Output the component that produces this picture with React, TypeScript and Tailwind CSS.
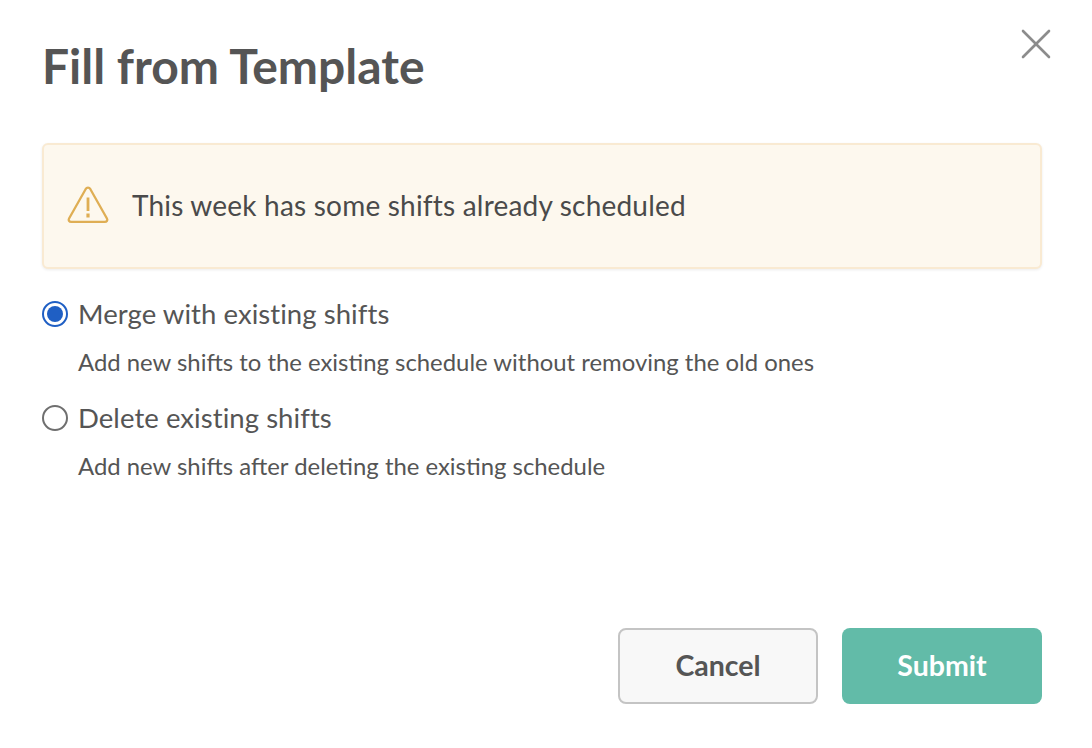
import { X } from 'lucide-react';

const font = { fontFamily: '"Lato", "Noto Sans", sans-serif' };

function WarningIcon() {
    return (
        <svg width="42" height="38" viewBox="0 0 42 38" fill="none" className="shrink-0 -translate-y-[1px]">
            <path d="M18.6 3.2 2.2 32.2C1 34.4 2.2 35.8 4.2 35.8H37.8C39.8 35.8 41 34.4 39.8 32.2L23.4 3.2C22.2 1.2 19.8 1.2 18.6 3.2Z" stroke="#dfae54" strokeWidth="2.3" strokeLinejoin="round" />
            <path d="M21 11.5V25" stroke="#dfae54" strokeWidth="2.8" />
            <path d="M21 27.5V31.5" stroke="#dfae54" strokeWidth="3.2" />
        </svg>
    );
}

function RadioOption({ label, hint, checked }: { label: string; hint: string; checked?: boolean }) {
    return (
        <div className="flex flex-col">
            <div className="flex items-center gap-[10px] h-[26px]">
                <span className={`flex items-center justify-center w-[26px] h-[26px] rounded-full border-2 bg-white ${checked ? 'border-[#1f5fc4]' : 'border-[#6f6f6f]'}`}>
                    {checked && <span className="w-[16px] h-[16px] rounded-full bg-[#1f5fc4]" />}
                </span>
                <span className="text-[27.5px] tracking-[0.06px] leading-[26px] text-[#555555]">{label}</span>
            </div>
            <p className="mt-[19px] ml-[36px] text-[23.9px] leading-[31px] text-[#555555]">{hint}</p>
        </div>
    );
}

export default function App() {
    return (
        <div className="relative w-[1092px] h-[748px] bg-white overflow-hidden antialiased" style={font}>
            <button className="absolute top-[18px] right-[30px] text-[#8c8c8c]">
                <X className="w-[52px] h-[52px]" strokeWidth={1.2} />
            </button>

            <div className="flex flex-col h-full pl-[42px] pr-[50px] pt-[37px] pb-[44px]">
                <h1 className="text-[48px] leading-[58px] font-bold text-[#555555]">Fill from Template</h1>

                <div className="mt-[48px] flex items-center gap-[23px] h-[126px] pl-[23px] rounded-[6px] border-2 border-[#f9ead2] bg-[#fdf8ee] shadow-[0_1px_3px_rgba(0,0,0,0.08)]">
                    <WarningIcon />
                    <span className="text-[28px] tracking-[0.2px] text-[#4a4a4a] -translate-y-[1px]">This week has some shifts already scheduled</span>
                </div>

                <div className="mt-[32px] flex flex-col gap-[28px]">
                    <RadioOption checked label="Merge with existing shifts" hint="Add new shifts to the existing schedule without removing the old ones" />
                    <RadioOption label="Delete existing shifts" hint="Add new shifts after deleting the existing schedule" />
                </div>

                <div className="mt-auto flex justify-end gap-[24px]">
                    <button className="w-[200px] h-[76px] pb-[2px] rounded-[8px] border-2 border-[#c4c4c4] bg-[#f8f8f8] text-[28.5px] font-bold text-[#555555]">Cancel</button>
                    <button className="w-[200px] h-[76px] pb-[2px] rounded-[8px] bg-[#62bba8] text-[28.5px] font-bold text-white">Submit</button>
                </div>
            </div>
        </div>
    );
}
